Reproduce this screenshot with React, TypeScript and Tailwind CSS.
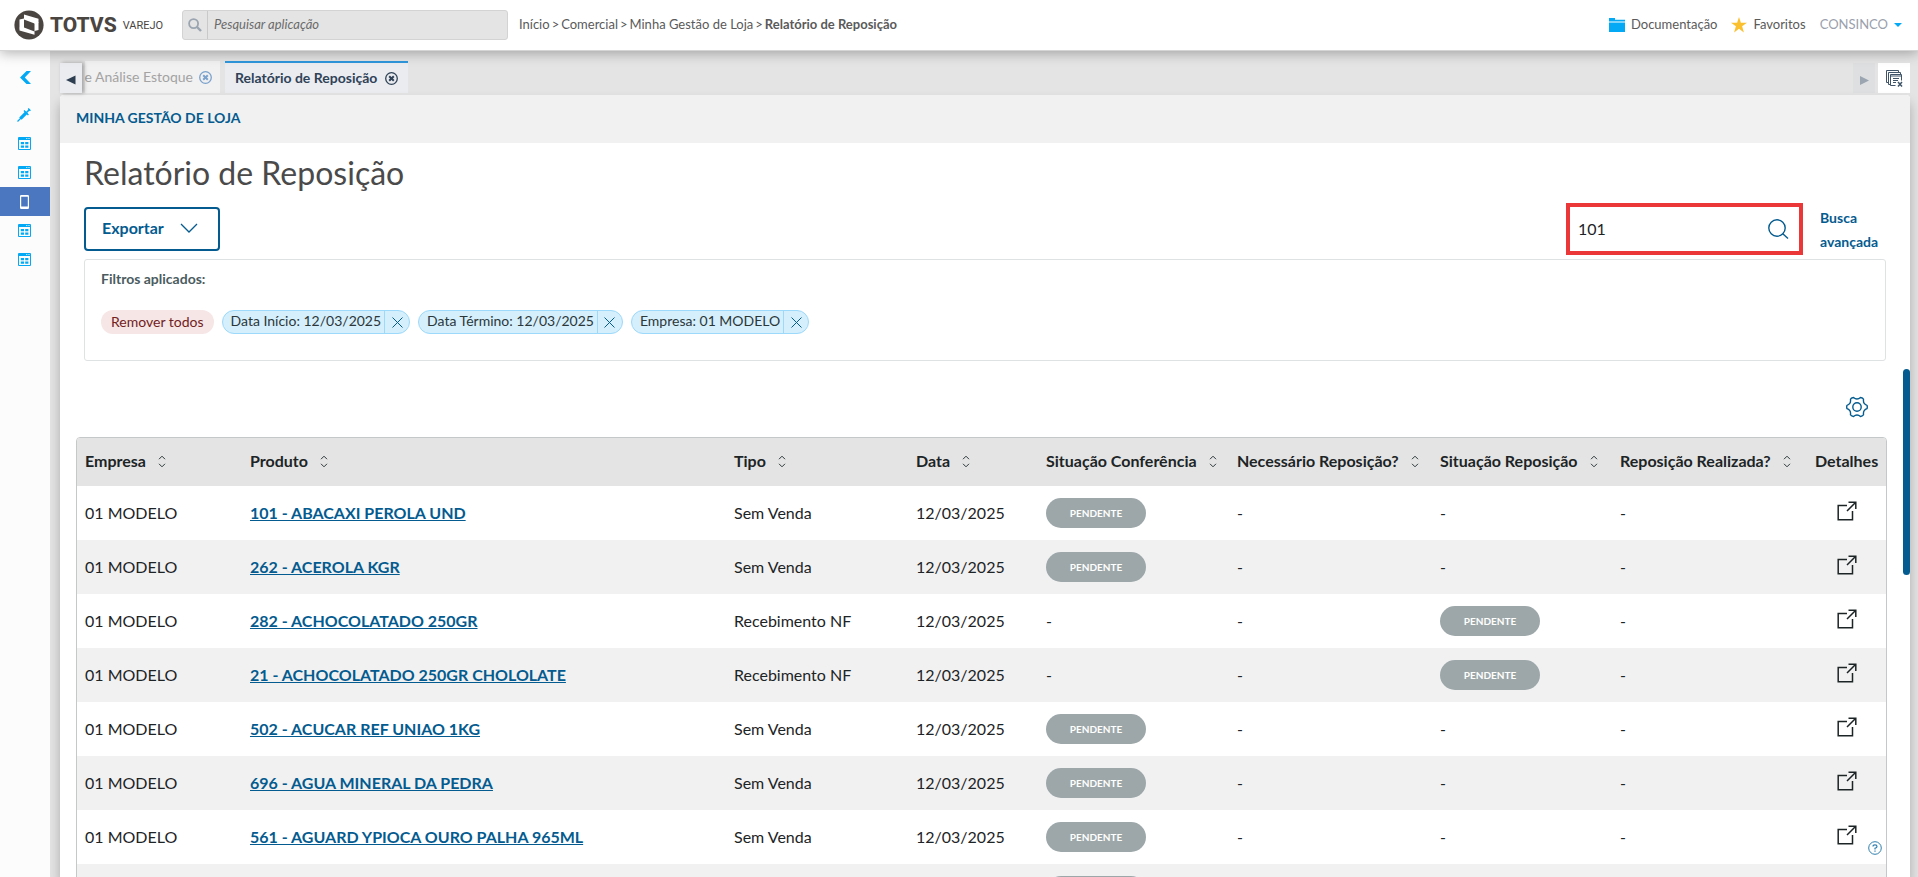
import React from 'react';

type Status = 'PENDENTE' | '-';

interface Row {
  produto: string;
  tipo: string;
  conferencia: Status;
  reposicao: Status;
}

const rows: Row[] = [
  { produto: '101 - ABACAXI PEROLA UND', tipo: 'Sem Venda', conferencia: 'PENDENTE', reposicao: '-' },
  { produto: '262 - ACEROLA KGR', tipo: 'Sem Venda', conferencia: 'PENDENTE', reposicao: '-' },
  { produto: '282 - ACHOCOLATADO 250GR', tipo: 'Recebimento NF', conferencia: '-', reposicao: 'PENDENTE' },
  { produto: '21 - ACHOCOLATADO 250GR CHOLOLATE', tipo: 'Recebimento NF', conferencia: '-', reposicao: 'PENDENTE' },
  { produto: '502 - ACUCAR REF UNIAO 1KG', tipo: 'Sem Venda', conferencia: 'PENDENTE', reposicao: '-' },
  { produto: '696 - AGUA MINERAL DA PEDRA', tipo: 'Sem Venda', conferencia: 'PENDENTE', reposicao: '-' },
  { produto: '561 - AGUARD YPIOCA OURO PALHA 965ML', tipo: 'Sem Venda', conferencia: 'PENDENTE', reposicao: '-' },
];

const columns = [
  { label: 'Empresa', width: 'w-[165px]' },
  { label: 'Produto', width: '' },
  { label: 'Tipo', width: 'w-[182px]' },
  { label: 'Data', width: 'w-[130px]' },
  { label: 'Situação Conferência', width: 'w-[191px]' },
  { label: 'Necessário Reposição?', width: 'w-[203px]' },
  { label: 'Situação Reposição', width: 'w-[180px]' },
  { label: 'Reposição Realizada?', width: 'w-[195px]' },
  { label: 'Detalhes', width: 'w-[79px]' },
];

const filters = ['Data Início: 12/03/2025', 'Data Término: 12/03/2025', 'Empresa: 01 MODELO'];

const Logo = () => (
  <div className="flex items-center text-[#4a4541] font-['Roboto',sans-serif]">
    <svg width="30" height="30" viewBox="0 0 30 30">
      <circle cx="15" cy="15" r="14.6" fill="#4a4541" />
      <path d="M10 4.500 L24.500 8.800 V20 L20.500 21 V24.800 L5.500 20.500 V9.500 L10 8.500 Z" fill="#fff" />
      <path d="M10 9.500 L20.500 13.500 V21.500 L10 17.500 Z" fill="#4a4541" />
      <path d="M20.500 13.500 L24.500 12.500 M5.500 18 L10 17" stroke="#fff" strokeWidth="0.600" />
    </svg>
    <span className="ml-1.5 text-[21px] leading-none font-extrabold">TOTVS</span>
    <span className="ml-1.5 text-[11px] leading-none">VAREJO</span>
  </div>
);

const CalendarIcon = () => (
  <svg width="13" height="13" viewBox="0 0 13 13" fill="#03a9f4">
    <path d="M1 0h11a1 1 0 0 1 1 1v11a1 1 0 0 1-1 1H1a1 1 0 0 1-1-1V1a1 1 0 0 1 1-1zm0 3v9h11V3zM8.3 1v1h1V1zm2.2 0v1h1V1z" fillRule="evenodd" />
    <path d="M2.8 5h3.2v2.3H2.8zM7.2 5h3.2v2.3H7.2zM2.8 8.5h3.2v2.2H2.8zM7.2 8.5h3.2v2.2H7.2z" />
  </svg>
);

const SyringeIcon = () => (
  <svg width="14" height="14" viewBox="0 0 14 14" stroke="#03a9f4" fill="none">
    <path d="M0.5 13.5 L4 10" strokeWidth="1.2" />
    <path d="M3.4 10.6 L9.6 4.4" strokeWidth="3.4" />
    <path d="M9.5 4.5 L12.5 1.5" strokeWidth="1.6" />
    <path d="M7 2.6 L11.4 7 M11.2 0.6 L13.4 2.8" strokeWidth="1.4" />
  </svg>
);

const PhoneIcon = () => (
  <svg width="9" height="14" viewBox="0 0 9 14">
    <path d="M1.2 0h6.600A1.200 1.200 0 0 1 9 1.200v11.600A1.200 1.200 0 0 1 7.800 14H1.200A1.200 1.200 0 0 1 0 12.800V1.200A1.200 1.200 0 0 1 1.200 0zM1.200 1.700v9.800h6.600V1.700z" fill="#fff" fillRule="evenodd" />
  </svg>
);

const CloseCircle = ({ color }: { color: string }) => (
  <svg width="13" height="13" viewBox="0 0 13 13" fill="none" stroke={color}>
    <circle cx="6.5" cy="6.5" r="5.8" strokeWidth="1.3" />
    <path d="M4.2 4.2 L8.8 8.8 M8.8 4.2 L4.2 8.8" strokeWidth="2" />
  </svg>
);

const SortIcon = () => (
  <svg width="8" height="13" viewBox="0 0 8 13" fill="none" stroke="#2c3739">
    <path d="M1 4.200 L4 1.200 L7 4.200 M1 8.800 L4 11.800 L7 8.800" />
  </svg>
);

const ExternalIcon = () => (
  <svg width="20" height="20" viewBox="0 0 20 20" fill="none" stroke="#1d2426" strokeWidth="1.500">
    <path d="M10 4.500 H1.200 V18.800 H15.500 V10" />
    <path d="M10 10 L18.500 1.500 M11.500 1.200 H18.800 V8" />
  </svg>
);

const Badge = ({ label }: { label?: string }) => (
  <span className="inline-flex h-[30px] w-[100px] items-center justify-center rounded-full bg-[#9da7a9] align-middle text-[10px] font-bold text-white">
    {label}
  </span>
);

const StatusCell = ({ status }: { status: Status }) => (
  <td className="px-2">{status === 'PENDENTE' ? <Badge label={status} /> : '-'}</td>
);

const TopBar = () => (
  <header className="relative z-20 flex h-[51px] shrink-0 items-center border-b border-[#d5d5d5] bg-white pl-3.5 pr-4 text-[13px] text-[#5a5a5a] shadow-[0_2px_12px_rgba(0,0,0,0.3)]">
    <div className="w-[168px] shrink-0">
      <Logo />
    </div>
    <label className="flex h-[30px] w-[326px] items-stretch rounded-[3px] border border-[#d3d3d3] bg-[#e4e4e4]">
      <span className="flex w-[25px] items-center justify-center border-r border-[#c9c9c9]">
        <svg width="14" height="14" viewBox="0 0 14 14" fill="none" stroke="#9aa5b1">
          <circle cx="5.600" cy="5.600" r="4.500" strokeWidth="1.800" />
          <path d="M9 9 L13 13" strokeWidth="2.400" />
        </svg>
      </span>
      <input
        aria-label="Pesquisar aplicação"
        placeholder="Pesquisar aplicação"
        className="min-w-0 flex-1 bg-transparent px-1.5 text-[13px] italic outline-none placeholder:text-[#6b6b6b]"
      />
    </label>
    <nav className="ml-[11px] flex gap-0.5 whitespace-nowrap">
      <a href="#inicio">Início</a>
      <span>&gt;</span>
      <a href="#comercial">Comercial</a>
      <span>&gt;</span>
      <a href="#gestao">Minha Gestão de Loja</a>
      <span>&gt;</span>
      <strong>Relatório de Reposição</strong>
    </nav>
    <div className="ml-auto flex items-center gap-3.5">
      <a href="#documentacao" className="flex items-center gap-1.5">
        <svg width="16" height="14" viewBox="0 0 16 14" fill="#03a9f4">
          <path d="M0 0h6v1.800h10V3.500H0z M0 4.500h16V14H0z" />
        </svg>
        Documentação
      </a>
      <a href="#favoritos" className="flex items-center gap-1.5">
        <svg width="16" height="16" viewBox="0 0 16 16" fill="#fbc02d">
          <path d="M8 0 L9.900 5.700 H16 L11.100 9.300 L12.900 15.500 L8 11.800 L3.100 15.500 L4.900 9.300 L0 5.700 H6.100 Z" />
        </svg>
        Favoritos
      </a>
      <button className="flex items-center gap-1.5 text-[#9aa0ac]">
        CONSINCO
        <svg width="8" height="4" viewBox="0 0 8 4" fill="#03a9f4">
          <path d="M0 0h8L4 4z" />
        </svg>
      </button>
    </div>
  </header>
);

const Sidebar = () => (
  <aside className="relative z-10 flex w-[50px] shrink-0 flex-col bg-[#fcfcfc]">
    <button aria-label="Recolher menu" className="flex h-[49px] items-center justify-center pt-1">
      <svg width="11" height="13" viewBox="0 0 11 13" fill="#03a9f4">
        <path d="M6.500 0 H11 L4.800 6.500 L11 13 H6.500 L0 6.500 Z" />
      </svg>
    </button>
    {['syringe', 'grid', 'grid', 'phone', 'grid', 'grid'].map((kind, i) => (
      <button
        key={i}
        aria-label={`Menu ${i + 1}`}
        className={
          kind === 'phone'
            ? 'flex h-[29px] items-center justify-center bg-[#4a77bf] pr-0.5'
            : 'flex h-[29px] items-center justify-center pr-0.5'
        }
      >
        {kind === 'syringe' && <SyringeIcon />}
        {kind === 'grid' && <CalendarIcon />}
        {kind === 'phone' && <PhoneIcon />}
      </button>
    ))}
  </aside>
);

const TabBar = () => (
  <div className="flex h-8 shrink-0 items-end text-sm">
    <button
      aria-label="Abas anteriores"
      className="relative z-10 flex h-[30px] w-[22px] items-center justify-center bg-[#ebecef] pt-1 shadow-[2px_0_4px_rgba(0,0,0,0.3)]"
    >
      <svg width="10" height="10" viewBox="0 0 10 10" fill="#2c3e50">
        <path d="M9.500 0.500v9L0 5z" />
      </svg>
    </button>
    <div className="ml-[3px] flex h-8 w-[135px] items-center justify-end gap-1.5 overflow-hidden bg-[#f1f1f1] pr-2 text-[#a3a3a3]">
      <span className="whitespace-nowrap">e Análise Estoque</span>
      <button aria-label="Fechar Análise Estoque">
        <CloseCircle color="#7ba2cc" />
      </button>
    </div>
    <div className="ml-[5px] flex h-8 items-center gap-2 border-t-2 border-[#2f96dc] bg-[#ebecef] px-2.5 font-bold text-[#2f4258]">
      <span className="whitespace-nowrap">Relatório de Reposição</span>
      <button aria-label="Fechar Relatório de Reposição">
        <CloseCircle color="#2f4258" />
      </button>
    </div>
    <button
      aria-label="Próximas abas"
      className="ml-auto flex h-[30px] w-[22px] items-center justify-center bg-[#dedfe0] pt-1"
    >
      <svg width="9" height="9" viewBox="0 0 9 9" fill="#9aa5b1">
        <path d="M0 0v9L9 4.500z" />
      </svg>
    </button>
    <button aria-label="Fechar todas as abas" className="ml-[3px] flex h-[30px] w-8 items-center justify-center bg-white">
      <svg width="17" height="17" viewBox="0 0 17 17" fill="none" stroke="#3f5468">
        <path d="M2.500 12.500 H0.500 V0.500 H12.500 V2.500 M4.500 14.500 H2.500 V2.500 H14.500 V4.500" />
        <path d="M9.500 15.500 H4.500 V4.500 H15.500 V10.500 M4.500 6 H15.500" />
        <path d="M7 8.500 H13 M7 10.500 H12 M7 12.500 H10" />
        <path d="M12 12 L16 16.500 M16 12 L12 16.500" strokeWidth="1.500" />
      </svg>
    </button>
  </div>
);

const Toolbar = () => (
  <div className="flex h-[52px] items-center">
    <button className="flex h-11 items-center gap-4 rounded border-2 border-[#045b8f] pr-5 pb-0.5 pl-4 text-base font-bold text-[#045b8f]">
      Exportar
      <svg width="18" height="10" viewBox="0 0 18 10" fill="none" stroke="#045b8f" strokeWidth="1.300">
        <path d="M1 1 L9 9 L17 1" />
      </svg>
    </button>
    <div className="ml-auto flex h-[52px] w-[237px] items-center border-4 border-[#ec3738] bg-white">
      <input
        aria-label="Pesquisar"
        defaultValue="101"
        className="h-full min-w-0 flex-1 pb-0.5 pl-2 text-base text-[#1d2426] outline-none"
      />
      <button aria-label="Buscar" className="mr-2.5">
        <svg width="22" height="22" viewBox="0 0 22 22" fill="none" stroke="#045b8f" strokeWidth="1.400">
          <circle cx="10" cy="10" r="8.200" />
          <path d="M15.800 15.800 L21 20.500" />
        </svg>
      </button>
    </div>
    <a href="#busca-avancada" className="ml-[17px] w-[66px] pt-0.5 text-sm leading-6 font-bold text-[#045b8f]">
      Busca avançada
    </a>
  </div>
);

const Filters = () => (
  <section className="mt-1 h-[102px] rounded-[3px] border border-[#dfe2e2] px-4 pt-[9px] text-sm">
    <h2 className="leading-5 font-bold text-[#4a5c60]">Filtros aplicados:</h2>
    <div className="mt-[21px] flex gap-2">
      <button className="h-6 rounded-full bg-[#f6e6e5] px-2.5 text-[#72211d]">Remover todos</button>
      {filters.map(label => (
        <span
          key={label}
          className="flex h-6 items-stretch rounded-full border border-[#9cd9fb] bg-[#d5effd] text-[#2c3739]"
        >
          <span className="flex items-center pr-[3px] pb-0.5 pl-2">{label}</span>
          <button
            aria-label={`Remover ${label}`}
            className="flex w-[25px] items-center justify-center border-l border-[#9cd9fb]"
          >
            <svg width="11" height="11" viewBox="0 0 11 11" stroke="#045b8f">
              <path d="M0.500 0.500 L10.500 10.500 M10.500 0.500 L0.500 10.500" />
            </svg>
          </button>
        </span>
      ))}
    </div>
  </section>
);

const ReportTable = () => (
  <div className="overflow-hidden rounded-t border border-[#c4c8c9]">
    <table className="w-full table-fixed border-collapse text-left text-base text-[#1d2426]">
      <thead>
        <tr className="h-12 bg-[#e4e4e4]">
          {columns.map(col => (
            <th key={col.label} className={`${col.width} px-2 pb-0.5 font-bold whitespace-nowrap`}>
              <span className="flex items-center gap-3">
                {col.label}
                {col.label !== 'Detalhes' && (
                  <button aria-label={`Ordenar por ${col.label}`}>
                    <SortIcon />
                  </button>
                )}
              </span>
            </th>
          ))}
        </tr>
      </thead>
      <tbody>
        {rows.map(row => (
          <tr key={row.produto} className="h-[54px] even:bg-[#f1f1f1]">
            <td className="px-2">01 MODELO</td>
            <td className="px-2">
              <a href="#produto" className="font-bold text-[#045b8f] underline">
                {row.produto}
              </a>
            </td>
            <td className="px-2">{row.tipo}</td>
            <td className="px-2">12/03/2025</td>
            <StatusCell status={row.conferencia} />
            <td className="px-2">-</td>
            <StatusCell status={row.reposicao} />
            <td className="px-2">-</td>
            <td className="pb-2 text-center">
              <button aria-label={`Detalhes de ${row.produto}`} className="align-middle">
                <ExternalIcon />
              </button>
            </td>
          </tr>
        ))}
        <tr className="h-[54px] even:bg-[#f1f1f1]">
          <td colSpan={4} />
          <td className="px-2">
            <Badge />
          </td>
          <td colSpan={4} />
        </tr>
      </tbody>
    </table>
  </div>
);

const App: React.FC = () => {
  return (
    <div className="flex h-screen flex-col overflow-hidden bg-[#e4e4e4] font-['Lato',sans-serif]">
      <TopBar />
      <div className="flex min-h-0 flex-1">
        <Sidebar />
        <main className="flex min-w-0 flex-1 flex-col pt-2.5 pr-2 pl-2.5">
          <TabBar />
          <div className="relative mt-0.5 min-h-0 flex-1 overflow-hidden rounded-t bg-white shadow-[0_8px_12px_rgba(0,0,0,0.25)]">
            <div className="flex h-12 items-center bg-[#f1f1f1] px-4 pb-0.5 text-sm font-bold text-[#045b8f]">
              MINHA GESTÃO DE LOJA
            </div>
            <div className="px-6">
              <h1 className="pt-1 pb-1 text-[32px] leading-[52px] font-normal text-[#4a4a4a]">Relatório de Reposição</h1>
              <Toolbar />
              <Filters />
              <div className="flex h-[76px] items-center justify-end pt-4 pr-[18px]">
                <button aria-label="Configurar colunas">
                  <svg width="22" height="22" viewBox="0 0 22 22" fill="none" stroke="#045b8f" strokeWidth="1.400">
                    <circle cx="11" cy="11" r="4.200" />
                    <path
                      d="M7.500 1.500 Q9.200 3 11 3 Q12.800 3 14.500 1.500 Q17 2 17.500 3.200 Q17.200 6 18.200 7.400 Q19.200 8.800 21 9.300 Q21.600 11 21 12.700 Q19.200 13.200 18.200 14.600 Q17.200 16 17.500 18.800 Q17 20 14.500 20.500 Q12.800 19 11 19 Q9.200 19 7.500 20.500 Q5 20 4.500 18.800 Q4.800 16 3.800 14.600 Q2.800 13.200 1 12.700 Q0.400 11 1 9.300 Q2.800 8.800 3.800 7.400 Q4.800 6 4.500 3.200 Q5 2 7.500 1.500 Z"
                      strokeLinejoin="round"
                    />
                  </svg>
                </button>
              </div>
            </div>
            <div className="pr-[23px] pl-4">
              <ReportTable />
            </div>
            <div className="absolute top-[274px] right-0 h-[206px] w-[7px] rounded-full bg-[#045b8f]" />
            <button aria-label="Ajuda" className="absolute right-7 bottom-[22px]">
              <svg width="14" height="14" viewBox="0 0 14 14" fill="none" stroke="#2f7fb0">
                <circle cx="7" cy="7" r="6.300" />
                <path d="M5 5.500 Q5 3.800 7 3.800 Q9 3.800 9 5.400 Q9 6.600 7 7.200 V8.500 M7 9.500 V10.700" strokeWidth="1.200" />
              </svg>
            </button>
          </div>
        </main>
      </div>
    </div>
  );
};

export default App;
